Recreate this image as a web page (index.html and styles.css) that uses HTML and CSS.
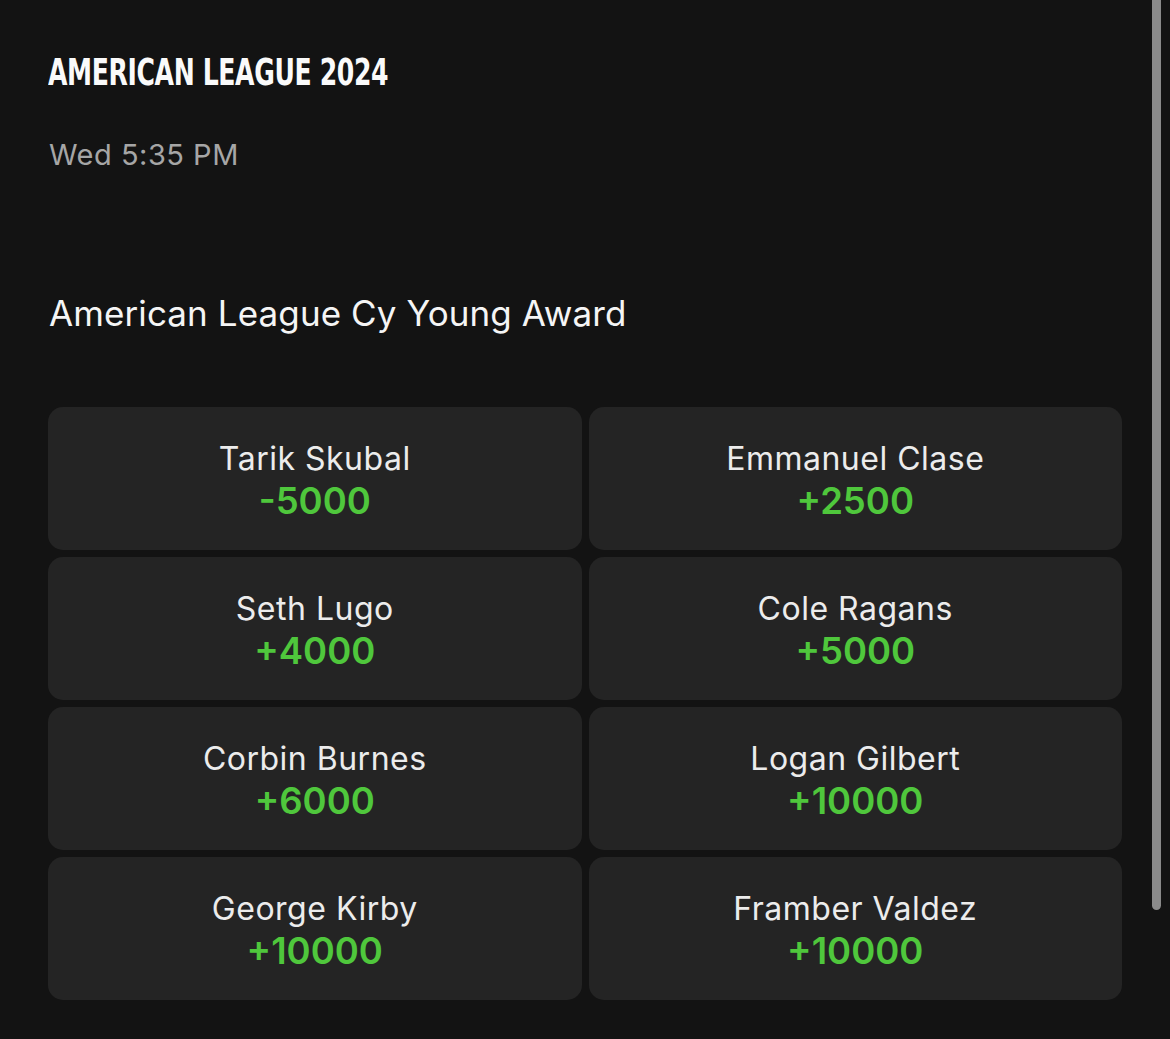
FILE: index.html
```html
<!DOCTYPE html>
<html>

<head>
  <meta charset="UTF-8">
  <title>American League 2024</title>
  <link rel="stylesheet" href="styles.css">
</head>

<body>

  <div id="page">
    <h1 class="league">AMERICAN LEAGUE 2024</h1>
    <div class="time">Wed 5:35 PM</div>

    <h2 class="market">American League Cy Young Award</h2>

    <div class="grid">
      <div class="pick"><span class="name">Tarik Skubal</span><span class="odds">-5000</span></div>
      <div class="pick"><span class="name">Emmanuel Clase</span><span class="odds">+2500</span></div>
      <div class="pick"><span class="name">Seth Lugo</span><span class="odds">+4000</span></div>
      <div class="pick"><span class="name">Cole Ragans</span><span class="odds">+5000</span></div>
      <div class="pick"><span class="name">Corbin Burnes</span><span class="odds">+6000</span></div>
      <div class="pick"><span class="name">Logan Gilbert</span><span class="odds">+10000</span></div>
      <div class="pick"><span class="name">George Kirby</span><span class="odds">+10000</span></div>
      <div class="pick"><span class="name">Framber Valdez</span><span class="odds">+10000</span></div>
    </div>
  </div>

  <div id="scrollThumb"></div>

</body>

</html>
```

FILE: styles.css
```css
:root {
  --bg: #131313;
  --card: #242424;
  --green: #4fc73c;
}

body {
  background-color: var(--bg);
  color: #f2f2f2;
  margin: 0;
  font-family: Inter, 'Liberation Sans', sans-serif;
  overflow: hidden;
  height: 1039px;
}

#page {
  padding: 50px 49px 0 48px;
}

.league {
  margin: 0;
  font-family: 'DejaVu Sans Condensed', sans-serif;
  font-weight: 700;
  font-size: 38px;
  line-height: 44px;
  color: #fafafa;
  letter-spacing: -0.5px;
  white-space: nowrap;
  transform: scaleX(0.735);
  transform-origin: left center;
}

.time {
  margin-top: 44px;
  margin-left: 1px;
  font-size: 29px;
  color: #a6a6a6;
  line-height: 34px;
  letter-spacing: 0.5px;
}

.market {
  margin: 121px 0 0 1px;
  font-weight: 400;
  font-size: 35px;
  line-height: 40px;
  color: #f5f5f5;
  letter-spacing: 0.1px;
}

.grid {
  margin-top: 74px;
  margin-right: -1px;
  display: grid;
  grid-template-columns: 1fr 1fr;
  gap: 7px;
}

.pick {
  background-color: var(--card);
  border-radius: 15px;
  height: 143px;
  display: flex;
  flex-direction: column;
  align-items: center;
  justify-content: center;
  padding-top: 2px;
  box-sizing: border-box;
}

.name {
  font-size: 32px;
  line-height: 42px;
  color: #ececec;
  letter-spacing: 0.5px;
}

.odds {
  font-size: 36.5px;
  line-height: 42px;
  font-weight: 600;
  color: var(--green);
}

#scrollThumb {
  position: absolute;
  left: 1152px;
  top: -10px;
  width: 9px;
  height: 920px;
  border-radius: 5px;
  background-color: #8a8a8a;
}
```
